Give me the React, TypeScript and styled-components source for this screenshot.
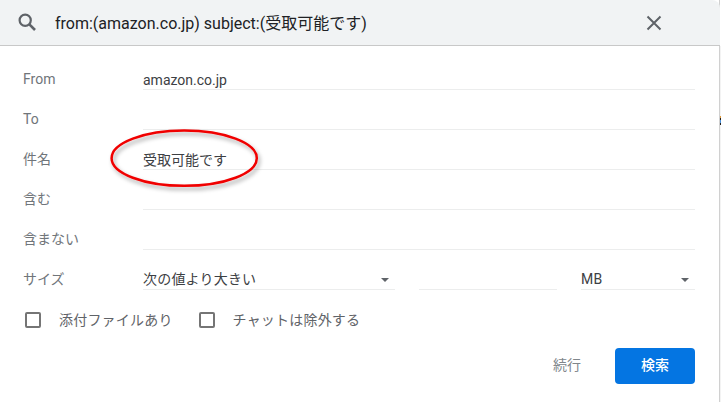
import * as React from 'react';
import styled, { createGlobalStyle } from 'styled-components';

const GlobalStyle = createGlobalStyle`
  html, body {
    margin: 0;
    background: #fff;
  }
  body {
    font-family: Roboto, "Noto Sans CJK JP", sans-serif;
    overflow: hidden;
  }
`;

const Panel = styled.div`
  position: relative;
  width: 720px;
  height: 402px;
  box-sizing: border-box;
  border-right: 1px solid #d0d0d0;
`;

/* sliver of the mail list behind the dialog */
const BackdropEdge = styled.div`
  position: absolute;
  left: 720px;
  top: 46px;
  width: 1px;
  height: 356px;
  background: linear-gradient(
    to bottom,
    #f3f3f3 0 70px,
    #e09a3c 70px 72px,
    #222 72px 74px,
    #4a8fd8 74px 77px,
    #222 77px 79px,
    #f3f3f3 79px
  );
`;

const SearchBar = styled.div`
  display: flex;
  align-items: center;
  height: 46px;
  box-sizing: border-box;
  margin-right: -1px;
  padding: 0 0 0 17px;
  background: #f1f3f4;
  border-bottom: 1px solid #c8c8c8;
  border-top-right-radius: 8px;
  color: #202124;
  font-size: 16px;
`;

const Query = styled.div`
  flex: 1;
  margin-left: 17px;
  padding-bottom: 1px;
`;

const CloseButton = styled.div`
  display: flex;
  margin-right: 58px;
`;

const Form = styled.div`
  padding: 4px 24px 0 23px;
`;

const Row = styled.div`
  display: flex;
  align-items: flex-end;
  height: 40px;
`;

const Label = styled.div`
  width: 120px;
  flex: none;
  padding-bottom: 1px;
  font-size: 14px;
  line-height: 20px;
  color: #70757a;
`;

const Field = styled.div<{ $width?: number; $gap?: number }>`
  display: flex;
  align-items: center;
  justify-content: space-between;
  ${(p) => (p.$width ? `width: ${p.$width}px; flex: none;` : 'flex: 1;')}
  margin-left: ${(p) => p.$gap ?? 0}px;
  min-height: 18px;
  border-bottom: 1px solid #eceded;
  font-size: 14px;
  line-height: 18px;
  color: #3c4043;
`;

const SelectText = styled.span`
  margin-top: -2px;
  letter-spacing: 0.2px;
`;

const Caret = styled.span`
  width: 0;
  height: 0;
  margin-right: 6px;
  border-left: 4px solid transparent;
  border-right: 4px solid transparent;
  border-top: 4px solid #5f6368;
`;

const Options = styled.div`
  display: flex;
  align-items: center;
  height: 18px;
  margin-top: 21px;
  margin-left: 2px;
`;

const Option = styled.label`
  display: flex;
  align-items: center;
  margin-right: 26px;
  font-size: 14px;
  letter-spacing: 0.2px;
  color: #5f6368;
`;

const OptionText = styled.span`
  margin-top: -3px;
`;

const Box = styled.span`
  width: 16px;
  height: 16px;
  box-sizing: border-box;
  border: 2px solid #757575;
  border-radius: 2px;
  margin-right: 18px;
`;

const Actions = styled.div`
  display: flex;
  justify-content: flex-end;
  align-items: center;
  gap: 34px;
  margin-top: 19px;
`;

const MoreButton = styled.div`
  margin-bottom: 5px;
  font-size: 14px;
  color: #80868b;
`;

const SearchButton = styled.div`
  width: 80px;
  height: 36px;
  line-height: 35px;
  text-align: center;
  background: #0475e2;
  border-radius: 4px;
  color: #fff;
  font-size: 14px;
  font-weight: 500;
`;

const Annotation = styled.svg`
  position: absolute;
  left: 100px;
  top: 120px;
  pointer-events: none;
`;

const fields = [
  { label: 'From', value: 'amazon.co.jp' },
  { label: 'To', value: '' },
  { label: '件名', value: '受取可能です' },
  { label: '含む', value: '' },
  { label: '含まない', value: '' },
];

export default function App() {
  return (
    <Panel>
      <GlobalStyle />
      <BackdropEdge />
      <SearchBar>
        <svg width="21" height="21" viewBox="0 0 21 21" fill="none" stroke="#5f6368" strokeWidth="2.2">
          <circle cx="8.2" cy="8.2" r="5.6" />
          <path d="M12.4 12.4 18 18" strokeWidth="2.6" />
        </svg>
        <Query>from:(amazon.co.jp) subject:(受取可能です)</Query>
        <CloseButton>
          <svg width="16" height="16" viewBox="0 0 16 16" stroke="#5f6368" strokeWidth="2" fill="none">
            <path d="M1.5 1.5 14.5 14.5M14.5 1.5 1.5 14.5" />
          </svg>
        </CloseButton>
      </SearchBar>
      <Form>
        {fields.map((f) => (
          <Row key={f.label}>
            <Label>{f.label}</Label>
            <Field>{f.value}</Field>
          </Row>
        ))}
        <Row>
          <Label>サイズ</Label>
          <Field $width={252}>
            <SelectText>次の値より大きい</SelectText>
            <Caret />
          </Field>
          <Field $width={138} $gap={24} />
          <Field $width={114} $gap={24}>
            <SelectText>MB</SelectText>
            <Caret />
          </Field>
        </Row>
        <Options>
          <Option>
            <Box />
            <OptionText>添付ファイルあり</OptionText>
          </Option>
          <Option>
            <Box />
            <OptionText>チャットは除外する</OptionText>
          </Option>
        </Options>
        <Actions>
          <MoreButton>続行</MoreButton>
          <SearchButton>検索</SearchButton>
        </Actions>
      </Form>
      <Annotation width="170" height="80" viewBox="0 0 170 80">
        <defs>
          <filter id="ringShadow" x="-10%" y="-20%" width="120%" height="140%">
            <feDropShadow dx="2" dy="3" stdDeviation="2" floodColor="#000" floodOpacity="0.35" />
          </filter>
        </defs>
        <ellipse cx="84.2" cy="38.2" rx="72.6" ry="27.6" fill="none" stroke="#f00000" strokeWidth="2.5" filter="url(#ringShadow)" />
      </Annotation>
    </Panel>
  );
}
